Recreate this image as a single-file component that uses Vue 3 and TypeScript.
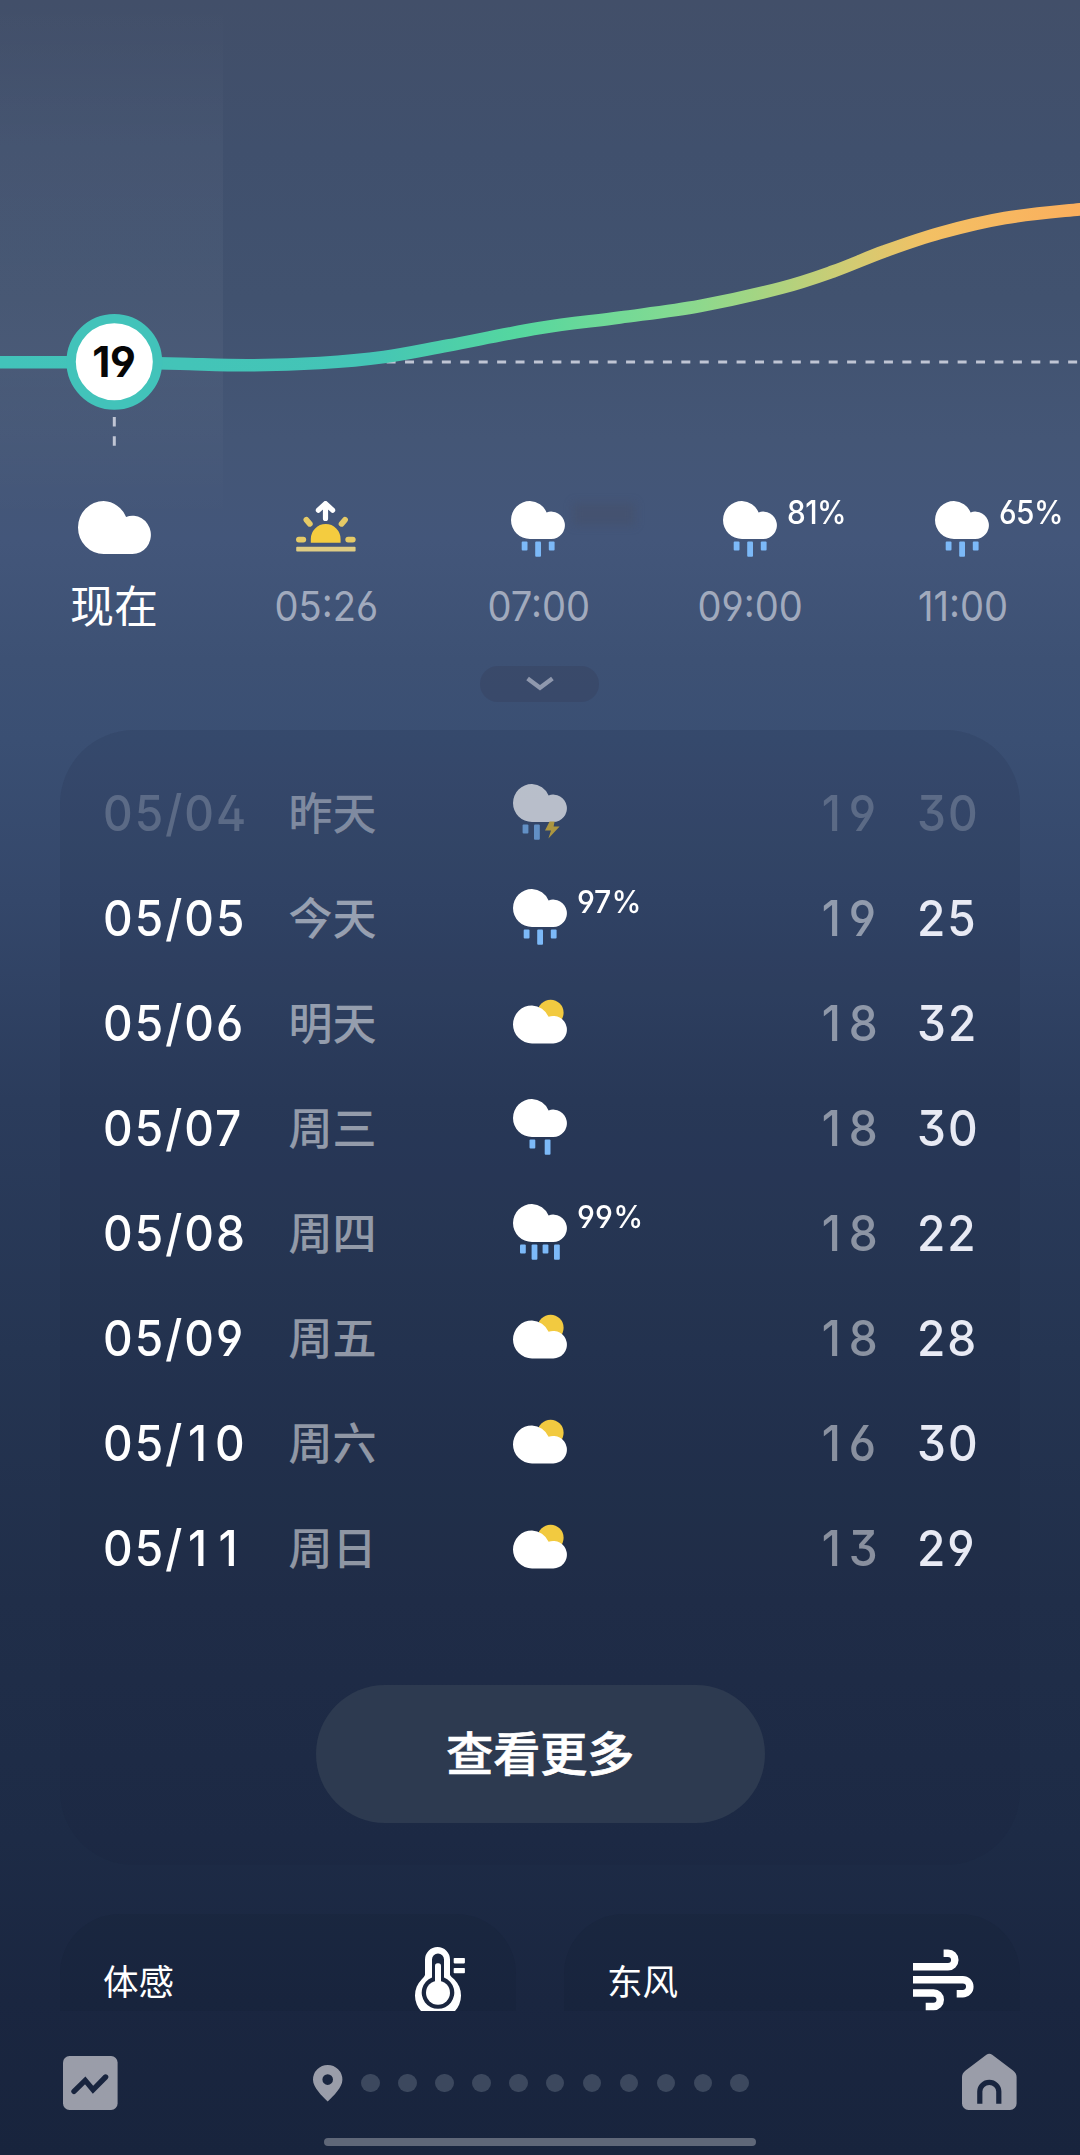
<script setup lang="ts">
import { defineComponent, h } from 'vue'

type Sky = 'cloud' | 'sunrise' | 'rain' | 'light' | 'heavy' | 'storm' | 'partly'

interface Hour {
  label: string
  sky: Sky
  chance?: string
  now?: boolean
  smudge?: boolean
}

interface Day {
  date: string
  name: string
  sky: Sky
  chance?: string
  low: number
  high: number
  past?: boolean
}

const hours: Hour[] = [
  { label: '现在', sky: 'cloud', now: true },
  { label: '05:26', sky: 'sunrise' },
  { label: '07:00', sky: 'rain', smudge: true },
  { label: '09:00', sky: 'rain', chance: '81%' },
  { label: '11:00', sky: 'rain', chance: '65%' },
]

const days: Day[] = [
  { date: '05/04', name: '昨天', sky: 'storm', low: 19, high: 30, past: true },
  { date: '05/05', name: '今天', sky: 'rain', chance: '97%', low: 19, high: 25 },
  { date: '05/06', name: '明天', sky: 'partly', low: 18, high: 32 },
  { date: '05/07', name: '周三', sky: 'light', low: 18, high: 30 },
  { date: '05/08', name: '周四', sky: 'heavy', chance: '99%', low: 18, high: 22 },
  { date: '05/09', name: '周五', sky: 'partly', low: 18, high: 28 },
  { date: '05/10', name: '周六', sky: 'partly', low: 16, high: 30 },
  { date: '05/11', name: '周日', sky: 'partly', low: 13, high: 29 },
]

// Smooth temperature curve through the sampled points (Catmull-Rom as beziers)
const samples: [number, number][] = [
  [114, 362.3], [180, 363.8], [250, 365.3], [320, 363], [384, 357], [448, 345.5], [540, 328],
  [620, 317.5], [700, 306], [781, 288], [833, 271.5], [884, 251.5], [940, 233], [1005, 218], [1080, 209.3], [1140, 204],
]
const curve = samples.reduce((d, p, i) => {
  if (i === 0) return `M0 362.3 L${p[0]} ${p[1]}`
  const a = samples[Math.max(i - 2, 0)]
  const b = samples[i - 1]
  const c = samples[Math.min(i + 1, samples.length - 1)]
  const x1 = b[0] + (p[0] - a[0]) / 6
  const y1 = b[1] + (p[1] - a[1]) / 6
  const x2 = p[0] - (c[0] - b[0]) / 6
  const y2 = p[1] - (c[1] - b[1]) / 6
  return `${d} C${x1} ${y1} ${x2} ${y2} ${p[0]} ${p[1]}`
}, '')

// Each drop: [left, height]
const drops: Partial<Record<Sky, [number, number][]>> = {
  rain: [[10.7, 9], [24.2, 15.4], [37.8, 9]],
  light: [[16.5, 9], [31.7, 15.4]],
  heavy: [[7, 9], [18.6, 15.4], [29.6, 9], [41, 15.4]],
  storm: [[9.6, 9], [21, 15.4]],
}

const CLOUD = 'M19 0A19 19 0 0 1 35.6 11.4A13.7 13.7 0 1 1 40.3 38H19A19 19 0 0 1 19 0Z'

// Digits in even columns: the narrow "1" gets a full-width cell
const Digits = defineComponent({
  props: { value: { type: [String, Number], required: true } },
  setup(props) {
    return () =>
      h('span', String(props.value).split(/(1)/).filter(Boolean).map((part) =>
        part === '1' ? h('span', { style: 'display:inline-block;box-sizing:border-box;width:33.4px;padding-left:4px' }, part) : part,
      ))
  },
})

const SkyIcon = defineComponent({
  props: { sky: { type: String, required: true } },
  setup(props) {
    return () => {
      const sky = props.sky as Sky
      if (sky === 'cloud') {
        return h('svg', { width: 73, height: 53, viewBox: '0 0 54 38', preserveAspectRatio: 'none' }, [
          h('path', { d: CLOUD, fill: '#fff' }),
        ])
      }
      if (sky === 'sunrise') {
        return h('svg', { width: 60, height: 56, viewBox: '0 0 60 56' }, [
          h('path', { d: 'M29.5 17.5V4M22.4 9.2L29.5 2.6L36.6 9.2', fill: 'none', stroke: '#fff', 'stroke-width': 5.2, 'stroke-linecap': 'round', 'stroke-linejoin': 'round' }),
          h('path', { d: 'M14.8 41.7V38A14.9 14.9 0 0 1 44.6 38V41.7Z', fill: '#f4cc3f' }),
          h('path', { d: 'M2.9 38.6H7.3M52.2 38.6H56.8M10.4 18.8L13.8 22.8M49 18.8L45.6 22.8', fill: 'none', stroke: '#e6ca66', 'stroke-width': 5.8, 'stroke-linecap': 'round' }),
          h('rect', { x: 0.2, y: 45.8, width: 59.4, height: 4.6, rx: 1, fill: '#dfcc83' }),
        ])
      }
      if (sky === 'partly') {
        return h('svg', { width: 55, height: 56, viewBox: '0 0 55 56' }, [
          h('circle', { cx: 37.6, cy: 18.8, r: 13, fill: '#f2ca40' }),
          h('path', { d: CLOUD, fill: '#fff', transform: 'translate(0 11.4)' }),
        ])
      }
      return h('svg', { width: 55, height: 56, viewBox: '0 0 55 56' }, [
        h('path', { d: CLOUD, fill: '#fff' }),
        ...(drops[sky] ?? []).map(([x, height]) => h('rect', { x, y: 40.4, width: 5.8, height, rx: 1, fill: '#7cb9f8' })),
        sky === 'storm' ? h('path', { d: 'M36.6 37.6L41.6 37.6L40.6 42.6H46.6L35.4 54.6L38 46.4H32Z', fill: '#eec22c' }) : null,
      ])
    }
  },
})
</script>

<template>
  <main class="screen">
    <svg class="chart" width="1080" height="501" viewBox="0 0 1080 501">
      <defs>
        <linearGradient id="heat" gradientUnits="userSpaceOnUse" x1="0" y1="0" x2="1080" y2="0">
          <stop offset="0" stop-color="#42c3ba" />
          <stop offset=".34" stop-color="#44c5b6" />
          <stop offset=".48" stop-color="#55d79f" />
          <stop offset=".62" stop-color="#82da92" />
          <stop offset=".7" stop-color="#a3d583" />
          <stop offset=".79" stop-color="#d3cb72" />
          <stop offset=".86" stop-color="#f3c064" />
          <stop offset="1" stop-color="#fbaf5d" />
        </linearGradient>
        <linearGradient id="band" x1="0" y1="0" x2="0" y2="1">
          <stop offset="0" stop-color="#fff" stop-opacity="0" />
          <stop offset=".3" stop-color="#fff" stop-opacity=".03" />
          <stop offset=".7" stop-color="#fff" stop-opacity=".038" />
          <stop offset="1" stop-color="#fff" stop-opacity="0" />
        </linearGradient>
      </defs>
      <rect width="223" height="520" fill="url(#band)" />
      <path d="M386.6 362H1080" stroke="#c0c5d4" stroke-width="3" stroke-dasharray="9 9.42" />
      <path :d="curve" fill="none" stroke="url(#heat)" stroke-width="12.6" />
      <circle cx="114.3" cy="361.8" r="43.2" fill="#fff" stroke="#42c3ba" stroke-width="9.4" />
      <text class="current" x="113.8" y="376.8" text-anchor="middle">19</text>
      <path d="M114.3 417V446" stroke="#c0c5d4" stroke-width="3" stroke-dasharray="9.6 9.6" />
    </svg>

    <section class="hours">
      <div v-for="hour in hours" :key="hour.label" class="hour">
        <div class="sky">
          <SkyIcon :sky="hour.sky" />
          <span v-if="hour.chance" class="chance">{{ hour.chance }}</span>
          <i v-if="hour.smudge" class="smudge"></i>
        </div>
        <span class="time" :class="{ now: hour.now }">{{ hour.label }}</span>
      </div>
    </section>

    <button class="expand" type="button">
      <svg width="28" height="16" viewBox="0 0 28 16">
        <path d="M1.6 2.4L14 11.8L26.4 2.4" fill="none" stroke="#8f98ad" stroke-width="4.4" />
      </svg>
    </button>

    <section class="card">
      <div v-for="day in days" :key="day.date" class="day" :class="{ past: day.past }">
        <Digits class="date" :value="day.date" />
        <span class="name">{{ day.name }}</span>
        <div class="sky">
          <SkyIcon :sky="day.sky" />
          <span v-if="day.chance" class="chance">{{ day.chance }}</span>
        </div>
        <Digits class="low" :value="day.low" />
        <Digits class="high" :value="day.high" />
      </div>
      <button class="more" type="button">查看更多</button>
    </section>

    <section class="tiles">
      <article class="tile feel">
        <span>体感</span>
        <svg width="51" height="70" viewBox="0 0 51 70">
          <path d="M10 12.5A12.5 12.5 0 0 1 35 12.5V28Q36 30 39.4 32.4A23 23 0 1 1 6.6 32.4Q9.4 30 10 28Z" fill="#fff" />
          <path d="M17 12.6A6 6 0 0 1 29 12.6V30.4A16.3 16.3 0 1 1 17 30.4Z" fill="#1a263f" />
          <circle cx="23" cy="45.7" r="12" fill="#fff" />
          <rect x="20" y="16.3" width="6" height="24" rx="2.6" fill="#fff" />
          <rect x="38.7" y="11" width="11.2" height="5.4" rx=".8" fill="#fff" />
          <rect x="38.7" y="21" width="11.2" height="5.2" rx=".8" fill="#fff" />
        </svg>
      </article>
      <article class="tile">
        <span>东风</span>
        <svg width="62" height="65" viewBox="0 -2.5 62 65">
          <path d="M0 17.3H35A6.8 6.8 0 0 0 35 3.7H30.6M0 30.2H49.8A7 7 0 0 1 49.8 44.2H43.7M0 43.5H20.5A6.75 6.75 0 0 1 20.5 57H12.7" fill="none" stroke="#fff" stroke-width="7.5" />
        </svg>
      </article>
    </section>

    <nav class="bar">
      <svg width="55" height="58" viewBox="0 0 55 58">
        <rect x="0" y="3" width="54.6" height="54" rx="6.5" fill="#9a9da9" />
        <path d="M11 38.4L22.2 27.4L30 36.8L42.6 24" fill="none" stroke="#18243e" stroke-width="5.4" stroke-linecap="round" stroke-linejoin="miter" />
      </svg>
      <div class="pages">
        <svg width="30" height="37" viewBox="0 0 30 37">
          <path fill-rule="evenodd" d="M14.7 0A14.7 14.7 0 0 1 29.4 14.7C29.4 22.5 20.5 30.6 14.7 36.6C8.9 30.6 0 22.5 0 14.7A14.7 14.7 0 0 1 14.7 0ZM14.7 9.3A5.3 5.3 0 1 0 14.7 19.9A5.3 5.3 0 1 0 14.7 9.3Z" fill="#9a9da9" />
        </svg>
        <i v-for="n in 11" :key="n"></i>
      </div>
      <svg width="55" height="58" viewBox="0 0 55 58">
        <path d="M24.4 1.8Q27.3 -.2 30.2 1.8L51 17.4Q54.6 20 54.6 24V50.5A6.5 6.5 0 0 1 48.1 57H6.5A6.5 6.5 0 0 1 0 50.5V24Q0 20 3.6 17.4Z" fill="#9a9da9" />
        <path d="M17.8 50.8V38.4A9.5 9 0 0 1 36.8 38.4V50.8" fill="none" stroke="#18243e" stroke-width="5.2" />
      </svg>
    </nav>
    <div class="handle"></div>
  </main>
</template>

<style>
html,
body {
  margin: 0;
  background: #18233c;
}
</style>

<style scoped>
.screen {
  box-sizing: border-box;
  display: flex;
  flex-direction: column;
  width: 1080px;
  height: 2155px;
  overflow: hidden;
  color: #fff;
  font-family: Inter, "Noto Sans CJK SC", sans-serif;
  font-feature-settings: "ss01";
  background: linear-gradient(
    180deg,
    #424f69 0,
    #40506d 150px,
    #41526f 300px,
    #445676 440px,
    #43567a 540px,
    #3d5174 660px,
    #3a4f73 740px,
    #34476a 900px,
    #2b3c5c 1100px,
    #253552 1350px,
    #202e49 1600px,
    #1d2b46 1840px,
    #1a2640 2000px,
    #18243d 2155px
  );
}

.chart {
  display: block;
  flex: none;
  overflow: visible;
}

.current {
  font-size: 42px;
  font-weight: 700;
  letter-spacing: -0.4px;
  fill: #060606;
}

.hours {
  display: flex;
  flex: none;
  height: 165px;
  padding-left: 8px;
}

.hour {
  display: flex;
  flex: none;
  flex-direction: column;
  align-items: center;
  width: 212px;
}

.sky {
  position: relative;
  height: 56px;
}

.sky svg {
  display: block;
}

.chance {
  position: absolute;
  top: -6px;
  left: 64px;
  font-size: 32px;
  font-weight: 530;
  line-height: 36px;
  letter-spacing: -0.6px;
  transform: scaleX(0.93);
  transform-origin: 0 50%;
}

.smudge {
  position: absolute;
  top: 2px;
  left: 62px;
  width: 62px;
  height: 22px;
  background: rgba(70, 76, 94, 0.32);
  filter: blur(5px);
}

.time {
  margin-top: 24.5px;
  color: #a1aabd;
  font-size: 41px;
  line-height: 48px;
  letter-spacing: 0;
  transform: translateX(0.6px) scaleX(0.93);
}

.now {
  margin-top: 26px;
  color: #fff;
  font-size: 44px;
  letter-spacing: 0;
  transform: none;
}

.expand {
  display: flex;
  flex: none;
  align-items: center;
  justify-content: center;
  width: 119px;
  height: 36px;
  margin-left: 480px;
  padding: 0;
  border: 0;
  border-radius: 18px;
  background: rgba(52, 60, 86, 0.32);
}

.card {
  display: flex;
  flex: none;
  flex-direction: column;
  box-sizing: border-box;
  width: 960px;
  height: 1135px;
  margin: 28px 0 0 60px;
  padding: 31px 42px 0 42.7px;
  border-radius: 74px;
  background: rgba(26, 30, 54, 0.12);
}

.day {
  display: grid;
  grid-template-columns: 185.9px 224.4px 305px 99.2px auto;
  align-items: center;
  height: 105px;
  font-size: 50px;
  font-weight: 500;
  line-height: 60px;
}

.date,
.low,
.high {
  margin-top: -1.4px;
  font-weight: 530;
  letter-spacing: 2.2px;
  white-space: nowrap;
  transform: scaleX(0.92);
  transform-origin: 0 50%;
}

.day .sky {
  top: -1.5px;
}

.day .chance {
  top: -5px;
  font-size: 31.5px;
  font-weight: 500;
  letter-spacing: 0.2px;
  transform: scaleX(0.96);
}

.name {
  color: rgba(255, 255, 255, 0.5);
  font-size: 44px;
}

.low {
  color: rgba(255, 255, 255, 0.47);
}

.high {
  color: #e8eaf4;
}

.past .date,
.past .low,
.past .high {
  color: rgba(255, 255, 255, 0.2);
}

.past .name {
  color: rgba(255, 255, 255, 0.38);
}

.past .sky {
  opacity: 0.65;
}

.more {
  width: 449px;
  height: 138px;
  margin: 84px 0 0 213px;
  padding: 0;
  border: 0;
  border-radius: 69px;
  color: #fff;
  background: #2d3a50;
  font-family: inherit;
  font-size: 47px;
  font-weight: 500;
  line-height: 138px;
  -webkit-text-stroke: 0.7px #fff;
}

.tiles {
  display: flex;
  flex: none;
  gap: 48px;
  height: 97px;
  margin: 49px 60px 0;
  overflow: hidden;
}

.tile {
  display: flex;
  flex: none;
  align-items: flex-start;
  justify-content: space-between;
  box-sizing: border-box;
  width: 456px;
  height: 200px;
  padding: 33px 45px 0 43px;
  border-radius: 60px;
  background: rgba(18, 26, 42, 0.12);
}

.feel {
  padding-right: 50px;
}

.tile span {
  margin-top: 10px;
  font-size: 35.5px;
  line-height: 52px;
}

.bar {
  display: flex;
  flex: none;
  align-items: flex-start;
  justify-content: space-between;
  height: 58px;
  margin: 42px 63px 0;
}

.pages {
  display: flex;
  gap: 18.4px;
  align-items: center;
  height: 60px;
  margin-left: -18px;
}

.pages i {
  width: 18.5px;
  height: 18.5px;
  border-radius: 50%;
  background: #3c485e;
}

.handle {
  flex: none;
  width: 432px;
  height: 8px;
  margin: 27px 0 0 324px;
  border-radius: 4px;
  background: #5f6778;
}
</style>
